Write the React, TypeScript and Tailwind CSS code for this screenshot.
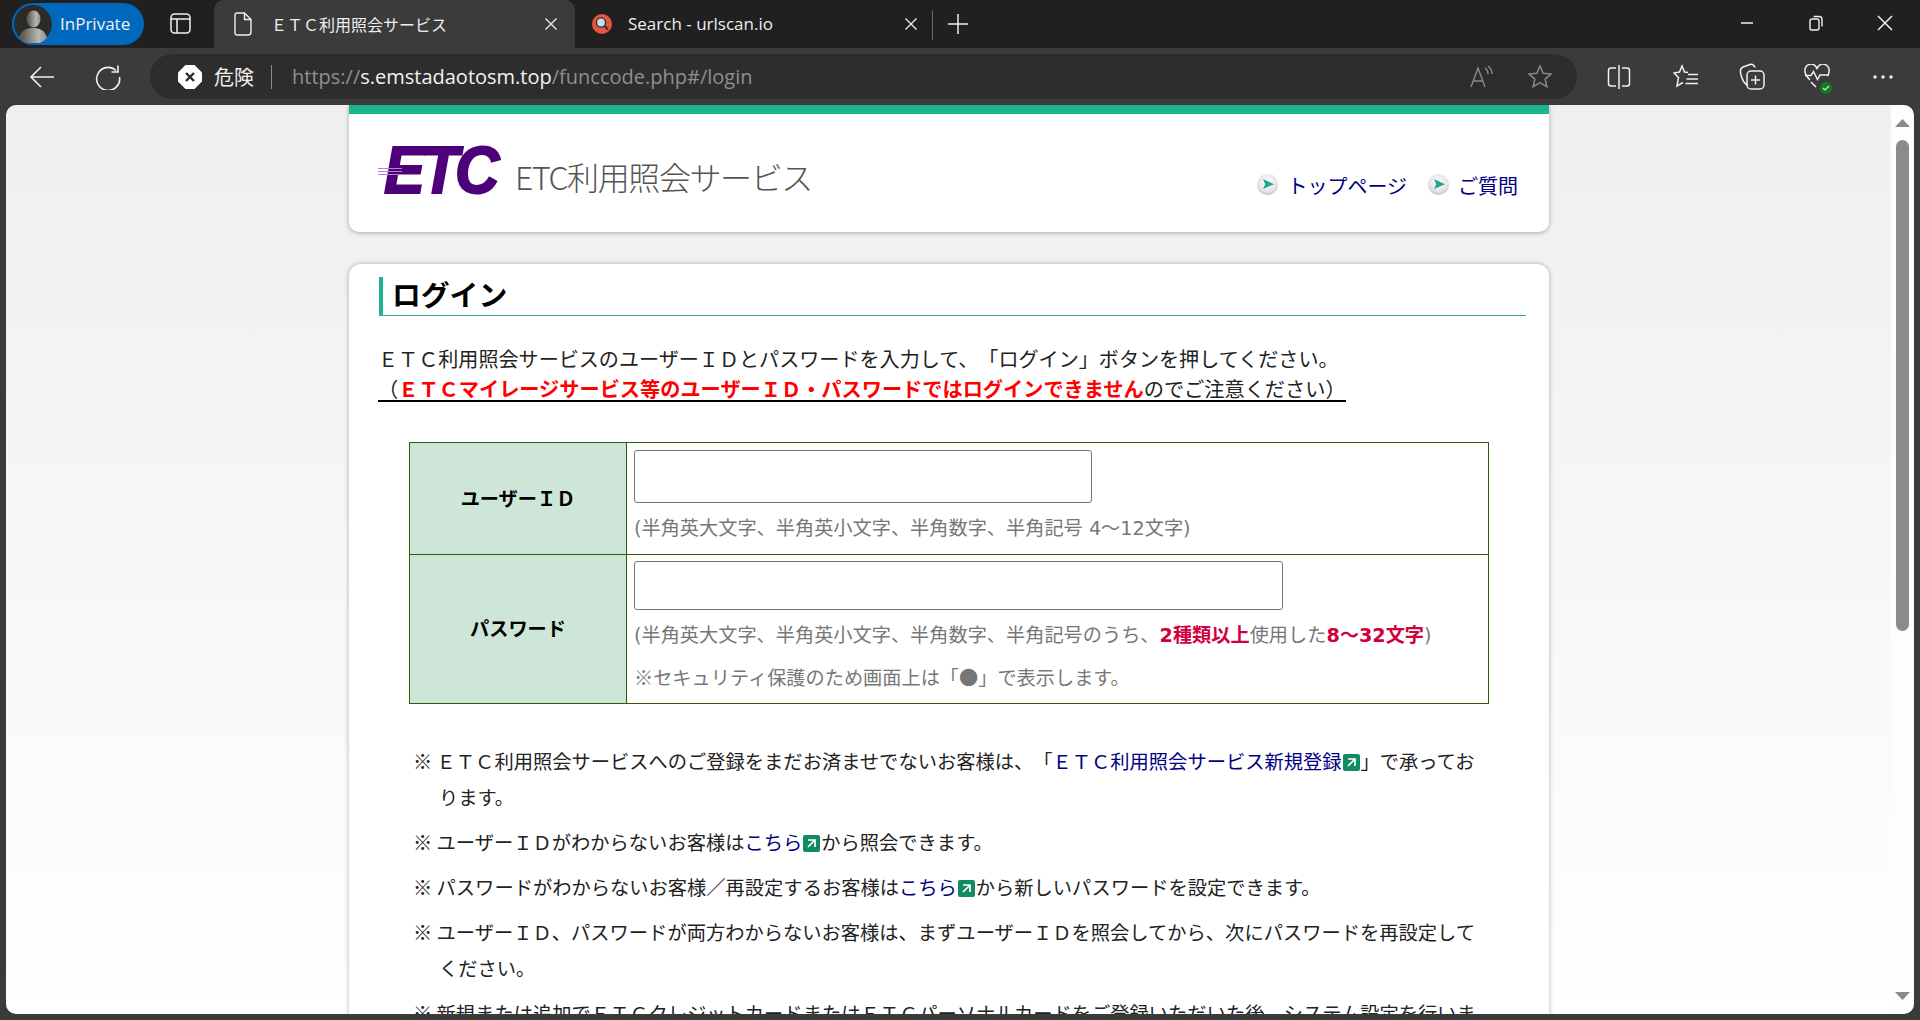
const jp = { fontFamily: '"Noto Sans CJK JP", sans-serif' }
// latin in the hints is wider than Noto, DejaVu is nearer to it
const hint = { fontFamily: '"DejaVu Sans", "Noto Sans CJK JP", sans-serif' }

function Avatar() {
  return (
    <svg width="38" height="38" viewBox="0 0 38 38">
      <defs>
        <linearGradient id="av" x1="0" x2="1" y1="0" y2="0">
          <stop offset="0.1" stopColor="#5a5955" />
          <stop offset="0.7" stopColor="#b8b7b2" />
          <stop offset="1" stopColor="#8d8c88" />
        </linearGradient>
      </defs>
      <circle cx="19" cy="19" r="19" fill="#2c2b2a" />
      <ellipse cx="19.5" cy="14" rx="7" ry="8.5" fill="url(#av)" />
      <path d="M5 33c2-8 8-10 14-10s12 2 14 10a19 19 0 0 1-28 0z" fill="url(#av)" />
    </svg>
  )
}

function Close({ color = '#e6e6e6' }: { color?: string }) {
  return (
    <svg width="14" height="14" viewBox="0 0 14 14" fill="none" stroke={color} strokeWidth="1.4">
      <path d="M1.5 1.5l11 11M12.5 1.5l-11 11" />
    </svg>
  )
}

function Bullet() {
  return (
    <svg width="21" height="21" viewBox="0 0 21 21" className="mt-[-3px] block shrink-0">
      <defs>
        <radialGradient id="bl" cx="0.5" cy="0.4" r="0.65">
          <stop offset="0" stopColor="#ffffff" />
          <stop offset="0.65" stopColor="#e6e6e6" />
          <stop offset="1" stopColor="#bdbdbd" />
        </radialGradient>
      </defs>
      <circle cx="10.5" cy="10.5" r="10.5" fill="url(#bl)" />
      <path d="M6 5l11 5.2L6 15l2.2-4.8z" fill="#1fa88e" />
    </svg>
  )
}

function Ext() {
  return (
    <svg width="17" height="17" viewBox="0 0 17 17" className="mx-[1px] inline-block align-[-2px]">
      <rect width="17" height="17" rx="2" fill="#128a62" />
      <path d="M5 5h7v7M11.500 5.500L5 12" fill="none" stroke="#fff" strokeWidth="1.700" />
    </svg>
  )
}

function TabStrip() {
  return (
    <div className="flex h-[48px] shrink-0 bg-[#202020]" style={{ fontFamily: '"Open Sans", "Noto Sans CJK JP", sans-serif' }}>
      <div className="ml-[12px] mt-[3px] flex h-[42px] w-[132px] items-center rounded-full bg-[#0068bd] pl-[2px]">
        <Avatar />
        <span className="ml-[8px] text-[17px] text-[#f2f2f2]">InPrivate</span>
      </div>
      <div className="ml-[26px] mt-[13px] h-[21px]">
        <svg width="21" height="21" viewBox="0 0 21 21" fill="none" stroke="#f0f0f0" strokeWidth="1.5">
          <rect x="1" y="1" width="19" height="19" rx="3.5" />
          <path d="M1 6h19M7 6v14" />
        </svg>
      </div>
      <div className="ml-[23px] flex h-[48px] w-[361px] items-center rounded-t-[10px] bg-[#3b3b3b] pl-[20px]">
        <svg width="18" height="24" viewBox="0 0 18 24" fill="none" stroke="#f0f0f0" strokeWidth="1.4">
          <path d="M3 1h7.5L17 7.5V20a3 3 0 0 1-3 3H3a2 2 0 0 1-2-2V3a2 2 0 0 1 2-2zM10.5 1v6.5H17" />
        </svg>
        <span className="ml-[19px] w-[273px] text-[16px] text-[#eeeeee]" style={jp}>ＥＴＣ利用照会サービス</span>
        <Close />
      </div>
      <div className="ml-[17px] flex h-[48px] items-center">
        <svg width="20" height="20" viewBox="0 0 20 20">
          <circle cx="10" cy="10" r="10" fill="#e4573d" />
          <circle cx="9" cy="8.5" r="4.6" fill="#c9dbe6" stroke="#27323c" strokeWidth="1.4" />
          <path d="M12.5 12l3.5 3.5" stroke="#27323c" strokeWidth="2" />
        </svg>
        <span className="ml-[16px] w-[276px] whitespace-nowrap text-[17px] text-[#eeeeee]">Search - urlscan.io</span>
        <Close />
      </div>
      <div className="ml-[14px] mt-[10px] h-[30px] w-px bg-[#6a6a6a]" />
      <div className="ml-[14px] mt-[13px]">
        <svg width="22" height="22" viewBox="0 0 22 22" stroke="#eeeeee" strokeWidth="1.5">
          <path d="M11 1v20M1 11h20" />
        </svg>
      </div>
      <div className="ml-auto flex h-[46px] items-center">
        <svg width="16" height="16" viewBox="0 0 16 16" stroke="#f0f0f0" strokeWidth="1.5" className="mr-[52px]">
          <path d="M2 8h12" />
        </svg>
        <svg width="18" height="18" viewBox="0 0 18 18" fill="none" stroke="#f0f0f0" strokeWidth="1.4" className="mr-[52px]">
          <rect x="3" y="5" width="9" height="11" rx="2" />
          <path d="M6.5 2.5h5.5a3 3 0 0 1 3 3v7" />
        </svg>
        <svg width="16" height="16" viewBox="0 0 16 16" fill="none" stroke="#f0f0f0" strokeWidth="1.5" className="mr-[27px]">
          <path d="M1 1l14 14M15 1L1 15" />
        </svg>
      </div>
    </div>
  )
}

function Toolbar() {
  return (
    <div className="flex h-[57px] shrink-0 items-center bg-[#3b3b3b]">
      <svg width="26" height="24" viewBox="0 0 26 24" fill="none" stroke="#f0f0f0" strokeWidth="1.6" className="ml-[29px]">
        <path d="M25 12H2M12 2L2 12l10 10" />
      </svg>
      <svg width="26" height="26" viewBox="0 0 26 26" fill="none" stroke="#f0f0f0" strokeWidth="1.6" className="ml-[40px]">
        <path d="M21 6.5A11.5 11.5 0 1 0 24.5 13M23 1.5v6.5h-6.5" />
      </svg>
      <div className="ml-[29px] flex h-[45px] w-[1427px] items-center rounded-full bg-[#2d2d2d] pl-[28px]">
        <svg width="24" height="24" viewBox="0 0 24 24">
          <path d="M7.5 0h9L24 7.5v9L16.5 24h-9L0 16.5v-9z" fill="#ffffff" />
          <path d="M8 8l8 8M16 8l-8 8" stroke="#2d2d2d" strokeWidth="2.4" />
        </svg>
        <span className="ml-[12px] text-[20px] text-[#eeeeee]" style={jp}>危険</span>
        <span className="ml-[17px] h-[24px] w-[1px] bg-[#8a8a8a]" />
        <span className="ml-[20px] text-[20px] text-[#8f8f8f]" style={{ fontFamily: '"Open Sans", sans-serif' }}>
          https://<span className="text-[#f2f2f2]">s.emstadaotosm.top</span>/funccode.php#/login
        </span>
        <svg width="26" height="24" viewBox="0 0 26 24" fill="none" stroke="#8a8a8a" strokeWidth="1.4" className="ml-auto">
          <path d="M1 22L8 3l7 19M3.5 16h9M15 3c2 1.5 3 3.5 3 6M18 1c2.5 2 4 5 4 8" />
        </svg>
        <svg width="26" height="26" viewBox="0 0 26 26" fill="none" stroke="#8a8a8a" strokeWidth="1.5" className="ml-[31px] mr-[24px]">
          <path d="M13 2l3.2 7.2 7.8.8-5.9 5.1 1.8 7.7L13 18.7l-6.9 4.1 1.8-7.7L2 10l7.8-.8z" />
        </svg>
      </div>
      <svg width="24" height="26" viewBox="0 0 24 26" fill="none" stroke="#f0f0f0" strokeWidth="1.5" className="ml-[30px]">
        <path d="M9 4H4a2.5 2.5 0 0 0-2.500 2.500v13A2.500 2.500 0 0 0 4 22h5M15 4h5a2.500 2.500 0 0 1 2.500 2.500v13A2.500 2.500 0 0 1 20 22h-5M12 1v24" />
      </svg>
      <svg width="26" height="26" viewBox="0 0 26 26" fill="none" stroke="#f0f0f0" strokeWidth="1.5" className="ml-[42px]">
        <path d="M15 8.500L11.500 8 9 2 6.500 8 1 9l4.500 4.500L4 22l6-3.500M15 10.500h10M13.500 15h11.500M12.500 19.500H25" />
      </svg>
      <svg width="26" height="28" viewBox="0 0 26 28" fill="none" stroke="#f0f0f0" strokeWidth="1.5" className="ml-[40px]">
        <path d="M9 22C5 21 3 17 1.500 10 1 7 2 5 4 4l7-2.500c2-.5 4 .5 5 3" />
        <rect x="8" y="8" width="17" height="18" rx="4" />
        <path d="M16.500 12.500v9M12 17h9" />
      </svg>
      <div className="relative ml-[39px] mt-[4px] h-[30px] w-[26px]">
        <svg width="26" height="24" viewBox="0 0 26 24" fill="none" stroke="#f0f0f0" strokeWidth="1.5">
          <path d="M6 16C3 13 1 11 1 7.500A6 6 0 0 1 13 5a6 6 0 0 1 12 2.500c0 1.500-.5 3-1.500 4.500M1 11.500h6l2.500-4 4 8 2.500-4.500h9M7 18l5 5" />
        </svg>
        <span className="absolute bottom-[0px] right-[-2px] flex h-[12px] w-[12px] items-center justify-center rounded-full bg-[#117a1e]">
          <svg width="8" height="8" viewBox="0 0 8 8" fill="none" stroke="#cfe8cf" strokeWidth="1.2">
            <path d="M1 4l2 2 4-4" />
          </svg>
        </span>
      </div>
      <svg width="20" height="4" viewBox="0 0 20 4" fill="#f0f0f0" className="ml-[43px]">
        <circle cx="2" cy="2" r="1.700" />
        <circle cx="10" cy="2" r="1.700" />
        <circle cx="18" cy="2" r="1.700" />
      </svg>
    </div>
  )
}

function HeaderCard() {
  return (
    <div className="flex h-[127px] rounded-b-[10px] border-t-[9px] border-[#1db58f] bg-white pl-[29px] shadow-[0_1px_5px_rgba(0,0,0,0.3)]">
      <div className="relative mt-[32px] h-[48px] w-[131px]">
        <span className="absolute left-[6px] top-[-14px] origin-left scale-x-[0.93] text-[66px] font-bold italic leading-[76px] tracking-[-4px] text-[#4d007a] [-webkit-text-stroke:2px_#4d007a]" style={{ fontFamily: '"Liberation Sans", sans-serif' }}>ETC</span>
        <span className="absolute left-0 top-[22px] h-[1px] w-[24px] bg-[#b486c8]" />
        <span className="absolute left-0 top-[25px] h-[1px] w-[24px] bg-[#b486c8]" />
        <span className="absolute left-0 top-[28px] h-[1px] w-[24px] bg-[#b486c8]" />
      </div>
      <span className="ml-[6px] mt-[40px] whitespace-nowrap text-[32px] font-light leading-[44px] tracking-[-1.4px] text-[#555555]" style={jp}>ETC利用照会サービス</span>
      <div className="ml-auto mr-[31px] mt-[60px] flex h-[24px] items-center text-[20px] text-[#000080]" style={jp}>
        <Bullet />
        <span className="ml-[9px]">トップページ</span>
        <span className="ml-[21px]"><Bullet /></span>
        <span className="ml-[9px]">ご質問</span>
      </div>
    </div>
  )
}

function FormTable() {
  return (
    <table className="ml-[60px] w-[1080px] table-fixed border-collapse" style={jp}>
      <tbody>
        <tr className="h-[112px]">
          <th className="w-[217px] border border-[#2f5a0a] bg-[#cde6d8] text-[19.2px] font-bold text-black">ユーザーＩＤ</th>
          <td className="border border-[#2f5a0a] px-[7px] align-top text-[#777777]">
            <input className="mt-[7px] block h-[53px] w-[458px] rounded-[3px] border border-[#767676] bg-white" />
            <p className="mt-[11px] whitespace-nowrap text-[19.2px] leading-[30px]" style={hint}>(半角英大文字、半角英小文字、半角数字、半角記号 4～12文字)</p>
          </td>
        </tr>
        <tr className="h-[149px]">
          <th className="border border-[#2f5a0a] bg-[#cde6d8] pb-[2px] text-[19.2px] font-bold text-black">パスワード</th>
          <td className="border border-[#2f5a0a] px-[7px] align-top text-[#777777]">
            <input className="mt-[6px] block h-[49px] w-[649px] rounded-[3px] border border-[#767676] bg-white" />
            <p className="mt-[11px] whitespace-nowrap text-[19.2px] leading-[30px]" style={hint}>(半角英大文字、半角英小文字、半角数字、半角記号のうち、<b className="text-[#d0003c]">2種類以上</b>使用した<b className="text-[#d0003c]">8～32文字</b>)</p>
            <p className="mt-[11px] whitespace-nowrap text-[19.2px] leading-[30px]">※セキュリティ保護のため画面上は「●」で表示します。</p>
          </td>
        </tr>
      </tbody>
    </table>
  )
}

const link = 'text-[#000080]'

function Notes() {
  const itemClass = 'pl-[26px] -indent-[26px] mb-[9px]'
  return (
    <ul className="ml-[64px] mt-[39px] w-[1070px] text-[19.28px] leading-[36px] text-[#222222]" style={jp}>
      <li className={itemClass}>※ ＥＴＣ利用照会サービスへのご登録をまだお済ませでないお客様は、「<span className={link}>ＥＴＣ利用照会サービス新規登録<Ext /></span>」で承っております。</li>
      <li className={itemClass}>※ ユーザーＩＤがわからないお客様は<span className={link}>こちら<Ext /></span>から照会できます。</li>
      <li className={itemClass}>※ パスワードがわからないお客様／再設定するお客様は<span className={link}>こちら<Ext /></span>から新しいパスワードを設定できます。</li>
      <li className={itemClass}>※ ユーザーＩＤ、パスワードが両方わからないお客様は、まずユーザーＩＤを照会してから、次にパスワードを再設定してください。</li>
      <li className={itemClass}>※ 新規または追加でＥＴＣクレジットカードまたはＥＴＣパーソナルカードをご登録いただいた後、システム設定を行います。</li>
    </ul>
  )
}

function LoginCard() {
  return (
    <div className="mt-[32px] rounded-[12px] bg-white pb-[40px] pt-[13px] shadow-[0_0_5px_rgba(0,0,0,0.3)]">
      <div className="ml-[30px] mr-[23px] h-[39px] border-b border-l-4 border-[#1db58f] border-b-[#3aa98a] pl-[9px] text-[28.8px] font-bold leading-[33px] text-black" style={jp}>ログイン</div>
      <div className="ml-[29px] mt-[28px] text-[#222222]" style={jp}>
        <p className="h-[30px] whitespace-nowrap text-[20.08px] leading-[30px]">ＥＴＣ利用照会サービスのユーザーＩＤとパスワードを入力して、「ログイン」ボタンを押してください。</p>
        <p className="inline-block h-[28px] whitespace-nowrap border-b-2 border-black text-[20.2px] leading-[30px]">（<b className="text-[#ff0000]">ＥＴＣマイレージサービス等のユーザーＩＤ・パスワードではログインできません</b>のでご注意ください）</p>
      </div>
      <div className="mt-[40px]">
        <FormTable />
      </div>
      <Notes />
    </div>
  )
}

function Scrollbar() {
  return (
    <div className="flex w-[23px] shrink-0 flex-col items-center bg-[#fdfdfd] pb-[14px] pt-[14px]">
      <svg width="15" height="8" viewBox="0 0 15 8" fill="#8a8a8a"><path d="M7.500 0L15 8H0z" /></svg>
      <div className="mt-[13px] h-[491px] w-[13px] rounded-full bg-[#8b8b8b]" />
      <svg width="15" height="8" viewBox="0 0 15 8" fill="#8a8a8a" className="mt-auto"><path d="M0 0h15L7.500 8z" /></svg>
    </div>
  )
}

export default function App() {
  return (
    <div className="flex h-[1020px] w-[1920px] flex-col overflow-hidden bg-[#3b3b3b] [text-spacing-trim:space-all]">
      <TabStrip />
      <Toolbar />
      <div className="mx-[6px] mb-[6px] flex min-h-0 flex-1 overflow-hidden rounded-[10px]">
        <div className="min-w-0 flex-1 overflow-hidden bg-linear-to-b from-[#efefef] to-white">
          <div className="ml-[343px] w-[1200px]">
            <HeaderCard />
            <LoginCard />
          </div>
        </div>
        <Scrollbar />
      </div>
    </div>
  )
}
